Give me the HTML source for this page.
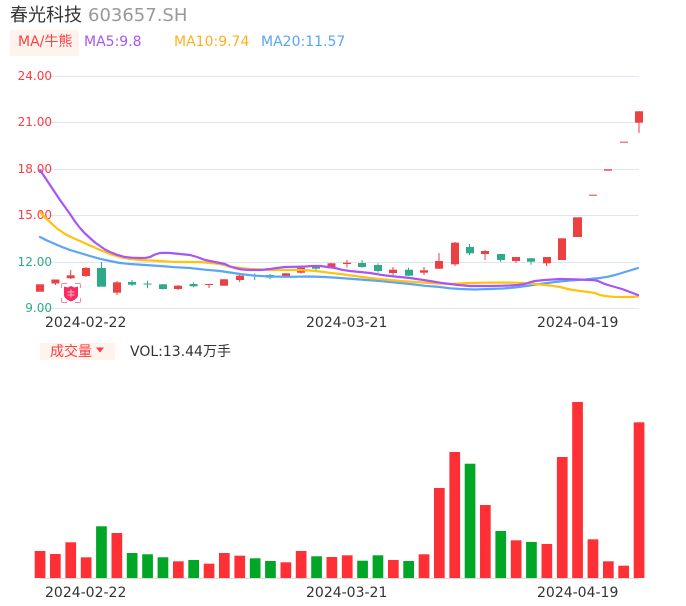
<!DOCTYPE html>
<html><head><meta charset="utf-8">
<style>
html,body{margin:0;padding:0;background:#fff;width:686px;height:606px;overflow:hidden}
svg{display:block;font-family:"DejaVu Sans","Noto Sans CJK SC",sans-serif}
</style></head>
<body>
<svg width="686" height="606" viewBox="0 0 686 606" xmlns="http://www.w3.org/2000/svg">
<text x="10" y="21" font-size="18" fill="#333">春光科技</text>
<text x="88" y="21" font-size="18" fill="#999">603657.SH</text>
<rect x="10" y="30" width="69" height="26" fill="#fff3ee"/>
<text x="18" y="46" font-size="14" fill="#ff4040">MA/牛熊</text>
<text x="84" y="46" font-size="14" fill="#a855f7">MA5:9.8</text>
<text x="174" y="46" font-size="14" fill="#ffb020">MA10:9.74</text>
<text x="261" y="46" font-size="14" fill="#5aa5f5">MA20:11.57</text>

<g stroke="#e0e6f1" stroke-width="1">
<path d="M40 76.500H639M40 122.500H639M40 169.500H639M40 215.500H639M40 262.500H639M40 308.500H639"/>
</g>
<g font-size="12" text-anchor="end">
<text x="52" y="80" fill="#ff3b3f">24.00</text>
<text x="52" y="126" fill="#ff3b3f">21.00</text>
<text x="52" y="173" fill="#ff3b3f">18.00</text>
<text x="52" y="219" fill="#ff3b3f">15.00</text>
<text x="52" y="266" fill="#2ea98a">12.00</text>
<text x="52" y="312" fill="#2ea98a">9.00</text>
</g>

<g fill="#ec4043">
<path d="M55.400 283v2M70.700 270v9M86 267v10M117 281v14M178 285v5M209 284v4M224 279v7M239.700 275v7M285 273v5M301 266.500v7M331 263v5M347 260v7.500M393 267v8M424 267v8M439 253v16M455 242v24M485 250v10M516 257v6M546.500 257v9M639 111v22" stroke="#ec4043" stroke-width="1"/>
<rect x="36" y="284.300" width="8" height="7.400"/>
<rect x="51.400" y="279.500" width="8" height="4"/>
<rect x="66.700" y="275.300" width="8" height="3"/>
<rect x="82" y="268" width="8" height="8"/>
<rect x="113" y="282.300" width="8" height="10.400"/>
<rect x="174" y="285.700" width="8" height="3.300"/>
<rect x="205" y="284" width="8" height="1"/>
<rect x="220" y="279.300" width="8" height="6.400"/>
<rect x="236" y="275.700" width="8" height="4.300"/>
<rect x="282" y="273.300" width="8" height="4"/>
<rect x="297" y="267.700" width="8" height="5"/>
<rect x="327.500" y="263.300" width="8" height="5"/>
<rect x="343" y="262.700" width="8" height="1.300"/>
<rect x="389" y="269.700" width="8" height="3.300"/>
<rect x="420" y="270.300" width="8" height="2.400"/>
<rect x="435" y="261" width="8" height="7.700"/>
<rect x="451" y="242.700" width="8" height="21.600"/>
<rect x="481" y="251" width="8" height="3"/>
<rect x="512" y="257" width="8" height="4"/>
<rect x="543" y="257" width="8" height="6.300"/>
<rect x="558" y="238.300" width="8" height="21.700"/>
<rect x="573" y="217.300" width="9" height="19.700"/>
<rect x="589" y="194.700" width="8" height="1"/>
<rect x="604" y="169.300" width="8" height="1.400"/>
<rect x="620" y="141.700" width="8" height="1"/>
<rect x="635" y="111.300" width="8" height="11.400"/>
</g>
<g fill="#2ea98a">
<path d="M101.500 262v7M132 280v6M147.500 280.700v7.600M163 284v5.500M193.600 282.300v5M254.700 273.300v6.700M270 274v5.300M316 265v5M362 260v7.700M378 263.300v9.400M408.500 267.700v8.300M469.500 244v11.300M500.500 254v7.700M531 258v6.700" stroke="#2ea98a" stroke-width="1"/>
<rect x="97" y="268" width="9" height="18.700"/>
<rect x="128" y="282" width="8" height="2.700"/>
<rect x="143.500" y="283.500" width="8" height="1"/>
<rect x="159" y="284.300" width="8" height="4.700"/>
<rect x="189.600" y="284" width="8" height="2.300"/>
<rect x="251" y="275.700" width="8" height="0.800"/>
<rect x="266" y="275" width="8" height="2.700"/>
<rect x="312" y="266" width="8" height="2.700"/>
<rect x="358" y="263" width="8" height="4"/>
<rect x="374" y="265" width="8" height="6"/>
<rect x="405" y="269.700" width="8" height="6"/>
<rect x="466" y="247" width="8" height="6.300"/>
<rect x="497" y="254" width="8" height="6"/>
<rect x="527" y="258.300" width="8" height="3.400"/>
</g>

<g fill="none" stroke-width="2.200" stroke-linejoin="round" stroke-linecap="round">
<polyline stroke="#5aa5f5" points="40,237 47,240.500 55,244 62,247 70,250 80,253 90,256 100,258.800 110,261 120,263 130,264 145,265 160,266 175,267.200 190,268 205,269.700 220,271 230,272.500 240,274 255,275.700 270,276.500 290,276.800 310,276.500 325,277 340,278 360,279.500 380,281 395,282.500 410,284 425,285.800 440,287 450,288.300 460,289 475,289.500 490,289 503,288.500 515,287.500 528,285.800 540,284 555,282 570,280.500 585,279.500 600,278 608,276.700 615,275 625,272 638,268"/>
<polyline stroke="#ffc20e" points="40,212 45,217.500 50,222 57,228.500 65,234 72,237.500 80,241 90,245.500 100,250 110,254 120,257 130,259 140,260 150,260.500 160,261 170,261.700 180,262 190,262 200,262 210,263 220,264 230,266.500 240,268 250,269 260,269.500 270,270 280,270 290,270 300,270 310,270.500 320,271.500 330,272.800 340,274 355,276 370,278 385,279.500 400,281 415,282 430,283 440,283.700 450,284 460,283.500 470,283 485,282.700 500,282.500 515,282.700 525,283 535,284 545,285 552,285.800 560,287 570,289.500 580,291 588,292 595,293 600,295 605,296 613,296.800 622,297 630,297 638,296.500"/>
<polyline stroke="#a855f7" points="40,170 45,177.500 50,185 55,192.500 60,200 65,207 70,214 75,221.500 80,228 85,233.500 90,238 95,242.500 100,246 105,249.500 110,252 117,254.800 125,257 132,257.700 140,258 146,257.800 150,257 155,254.500 160,253 165,252.800 170,253 180,254 190,255 197,257 205,260 215,262 225,264 230,266.500 235,268 242,269.500 250,270 260,270 270,269 277,268 285,267 295,266.800 305,266.500 312,266 320,266 328,267 335,268 342,269.800 350,271 360,272 370,273 380,274.700 390,276 400,277 410,278 420,279.500 430,281 440,282.700 450,284 460,285.200 470,286 480,286 490,286 500,285.800 510,285.500 518,285 525,284 530,282.300 535,281 545,280 560,279 575,279.300 590,280 595,280.300 598,281 603,283.300 608,285 615,287 622,289 630,292 638,295"/>
</g>

<!-- bull icon -->
<g fill="none" stroke="#ff7fa3" stroke-width="1">
<path d="M61.500 288v-3a1.500 1.500 0 0 1 1.500-1.500H67M75 283.500h4a1.500 1.500 0 0 1 1.500 1.500V288M80.500 298v3a1.500 1.500 0 0 1-1.500 1.500H75M67 302.500h-4a1.500 1.500 0 0 1-1.500-1.500V298"/>
</g>
<path d="M64 286.500l3.500 1 3.500-1.500 3.500 1.500 3.500-1v8.500c0 3-3.700 5.300-7 6.500-3.300-1.200-7-3.500-7-6.500z" fill="#fa2a62"/>
<path d="M67.500 292h7M67.500 295h7M71 289.500v8" stroke="#ffb8cc" stroke-width="1" fill="none"/>

<g font-size="14" fill="#333">
<text x="45" y="327">2024-02-22</text>
<text x="306" y="327">2024-03-21</text>
<text x="537" y="327">2024-04-19</text>
<text x="45" y="597">2024-02-22</text>
<text x="306" y="597">2024-03-21</text>
<text x="537" y="597">2024-04-19</text>
<text x="130" y="356">VOL:13.44万手</text>
</g>
<rect x="40" y="343" width="75" height="17" fill="#fff3ee"/>
<text x="50" y="356" font-size="14" fill="#ff3b3f">成交量</text>
<path d="M96 347.500h8l-4 5z" fill="#ff3b3f"/>

<path d="M40 578.500H639" stroke="#ddd" stroke-width="1"/>
<g fill="#ff3035">
<rect x="34.700" y="551" width="10.700" height="27"/>
<rect x="50" y="554" width="10.700" height="24"/>
<rect x="65.400" y="542.300" width="10.700" height="35.700"/>
<rect x="80.800" y="557.300" width="10.700" height="20.700"/>
<rect x="111.500" y="533" width="10.700" height="45"/>
<rect x="173" y="561.300" width="10.700" height="16.700"/>
<rect x="203.700" y="563.700" width="10.700" height="14.300"/>
<rect x="219" y="553" width="10.700" height="25"/>
<rect x="234.400" y="555.700" width="10.700" height="22.300"/>
<rect x="280.500" y="562.300" width="10.700" height="15.700"/>
<rect x="295.800" y="551" width="10.700" height="27"/>
<rect x="326.500" y="557" width="10.700" height="21"/>
<rect x="341.900" y="555.300" width="10.700" height="22.700"/>
<rect x="388" y="560" width="10.700" height="18"/>
<rect x="418.700" y="554.300" width="10.700" height="23.700"/>
<rect x="434" y="488" width="10.700" height="90"/>
<rect x="449.400" y="452" width="10.700" height="126"/>
<rect x="480" y="505" width="10.700" height="73"/>
<rect x="510.800" y="540.300" width="10.700" height="37.700"/>
<rect x="541.500" y="544" width="10.700" height="34"/>
<rect x="556.900" y="457" width="10.700" height="121"/>
<rect x="572.200" y="402" width="10.700" height="176"/>
<rect x="587.600" y="539.300" width="10.700" height="38.700"/>
<rect x="603" y="561.300" width="10.700" height="16.700"/>
<rect x="618.300" y="565.700" width="10.700" height="12.300"/>
<rect x="633.700" y="422.300" width="10.700" height="155.700"/>
</g>
<g fill="#00a625">
<rect x="96.100" y="526.300" width="10.700" height="51.700"/>
<rect x="126.800" y="553" width="10.700" height="25"/>
<rect x="142.200" y="554.300" width="10.700" height="23.700"/>
<rect x="157.600" y="557.300" width="10.700" height="20.700"/>
<rect x="188.300" y="560" width="10.700" height="18"/>
<rect x="249.800" y="558.300" width="10.700" height="19.700"/>
<rect x="265.100" y="561" width="10.700" height="17"/>
<rect x="311.200" y="556.300" width="10.700" height="21.700"/>
<rect x="357.200" y="560.700" width="10.700" height="17.300"/>
<rect x="372.600" y="555.300" width="10.700" height="22.700"/>
<rect x="403.300" y="561" width="10.700" height="17"/>
<rect x="464.700" y="463.700" width="10.700" height="114.300"/>
<rect x="495.400" y="531" width="10.700" height="47"/>
<rect x="526.100" y="542" width="10.700" height="36"/>
</g>
</svg>
</body></html>
